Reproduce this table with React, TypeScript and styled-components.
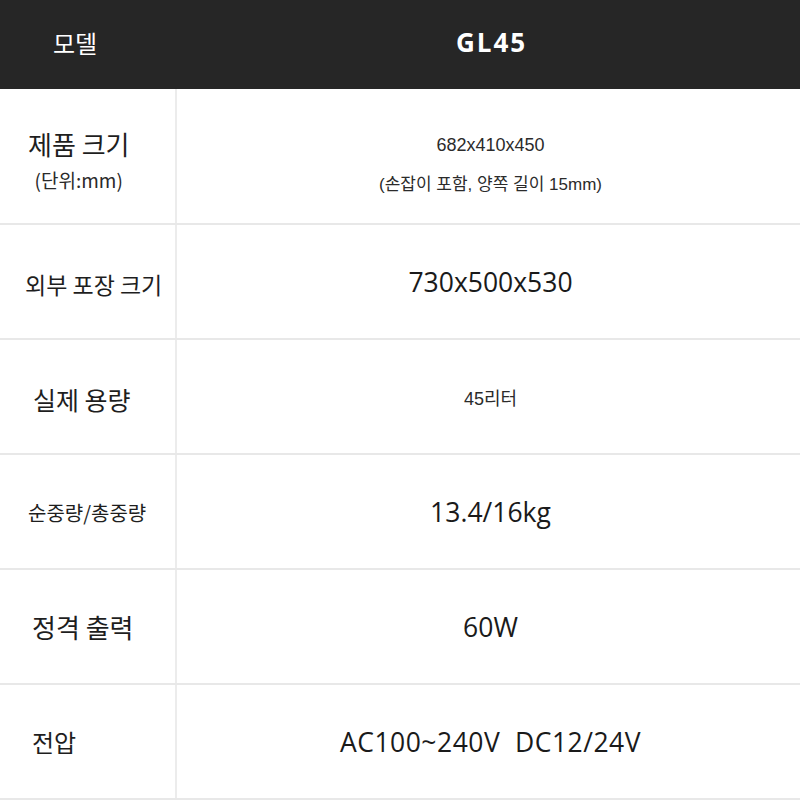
import styled, { createGlobalStyle } from 'styled-components';

const GlobalStyle = createGlobalStyle`
  html, body {
    margin: 0;
    padding: 0;
    background: #ffffff;
  }
  body {
    font-family: "Noto Sans CJK KR", "Noto Sans", sans-serif;
    color: #222222;
  }
`;

const Table = styled.div`
  width: 800px;
  display: flex;
  flex-direction: column;
`;

const HeaderRow = styled.div`
  display: grid;
  grid-template-columns: 177px 1fr;
  height: 89px;
  padding-bottom: 5px;
  box-sizing: border-box;
  background: #262626;
  color: #ffffff;
`;

const Row = styled.div<{ $height: number }>`
  display: grid;
  grid-template-columns: 177px 1fr;
  height: ${({ $height }) => $height}px;
  border-bottom: 2px solid #e8e8e8;
  box-sizing: border-box;
`;

const LabelCell = styled.div<{ $pad: number; $top?: number }>`
  display: flex;
  align-items: center;
  padding-left: ${({ $pad }) => $pad}px;
  padding-top: ${({ $top = 0 }) => $top}px;
  border-right: 2px solid #ececec;
  box-sizing: border-box;
`;

const HeaderLabel = styled.div`
  display: flex;
  align-items: center;
  padding-left: 53px;
  font-size: 24px;
`;

const ModelName = styled.div`
  display: flex;
  align-items: center;
  justify-content: center;
  padding-left: 6px;
  font-family: "Open Sans", "Noto Sans", sans-serif;
  font-weight: 700;
  font-size: 26px;
  letter-spacing: 2px;
`;

const LabelBlock = styled.div`
  display: flex;
  flex-direction: column;
  align-items: center;
`;

const Label = styled.span<{ $size: number }>`
  font-size: ${({ $size }) => $size}px;
  line-height: 1.3;
  color: #1e1e1e;
`;

const Unit = styled.span`
  margin-top: 5px;
  font-size: 19px;
  color: #2a2a2a;
`;

const ValueCell = styled.div<{ $top?: number }>`
  display: flex;
  flex-direction: column;
  align-items: center;
  justify-content: center;
  padding-left: 4px;
  padding-top: ${({ $top = 0 }) => $top}px;
`;

const Value = styled.span<{ $spacing?: number }>`
  font-family: "Open Sans", "Noto Sans", "Noto Sans CJK KR", sans-serif;
  font-size: 26.5px;
  letter-spacing: ${({ $spacing = 0 }) => $spacing}px;
  color: #1a1a1a;
  white-space: pre;
`;

const SmallValue = styled.span`
  font-family: "Liberation Sans", "Noto Sans CJK KR", sans-serif;
  font-size: 18px;
  color: #2b2b2b;
`;

const Note = styled.span`
  margin-top: 14px;
  font-family: "Liberation Sans", "Noto Sans CJK KR", sans-serif;
  font-size: 17px;
  color: #2b2b2b;
`;

type Spec = {
  label: string;
  size: number;
  value: string;
  pad: number;
  top?: number;
  small?: boolean;
  spacing?: number;
};

const specs: Spec[] = [
  { label: '외부 포장 크기', size: 23, value: '730x500x530', pad: 25, top: 6 },
  { label: '실제 용량', size: 25, value: '45리터', pad: 33, top: 6, small: true },
  { label: '순중량/총중량', size: 20, value: '13.4/16kg', pad: 28, top: 3 },
  { label: '정격 출력', size: 26, value: '60W', pad: 32 },
  { label: '전압', size: 24, value: 'AC100~240V  DC12/24V', pad: 32, spacing: 0.5 },
];

const App = () => {
  return (
    <>
      <GlobalStyle />
      <Table>
        <HeaderRow>
          <HeaderLabel>모델</HeaderLabel>
          <ModelName>GL45</ModelName>
        </HeaderRow>
        <Row $height={136}>
          <LabelCell $pad={28} $top={8}>
            <LabelBlock>
              <Label $size={26}>제품 크기</Label>
              <Unit>(단위:mm)</Unit>
            </LabelBlock>
          </LabelCell>
          <ValueCell $top={18}>
            <SmallValue>682x410x450</SmallValue>
            <Note>(손잡이 포함, 양쪽 길이 15mm)</Note>
          </ValueCell>
        </Row>
        {specs.map((s) => (
          <Row key={s.label} $height={115}>
            <LabelCell $pad={s.pad} $top={s.top}>
              <Label $size={s.size}>{s.label}</Label>
            </LabelCell>
            <ValueCell>
              {s.small ? (
                <SmallValue>{s.value}</SmallValue>
              ) : (
                <Value $spacing={s.spacing}>{s.value}</Value>
              )}
            </ValueCell>
          </Row>
        ))}
      </Table>
    </>
  );
};

export default App;
